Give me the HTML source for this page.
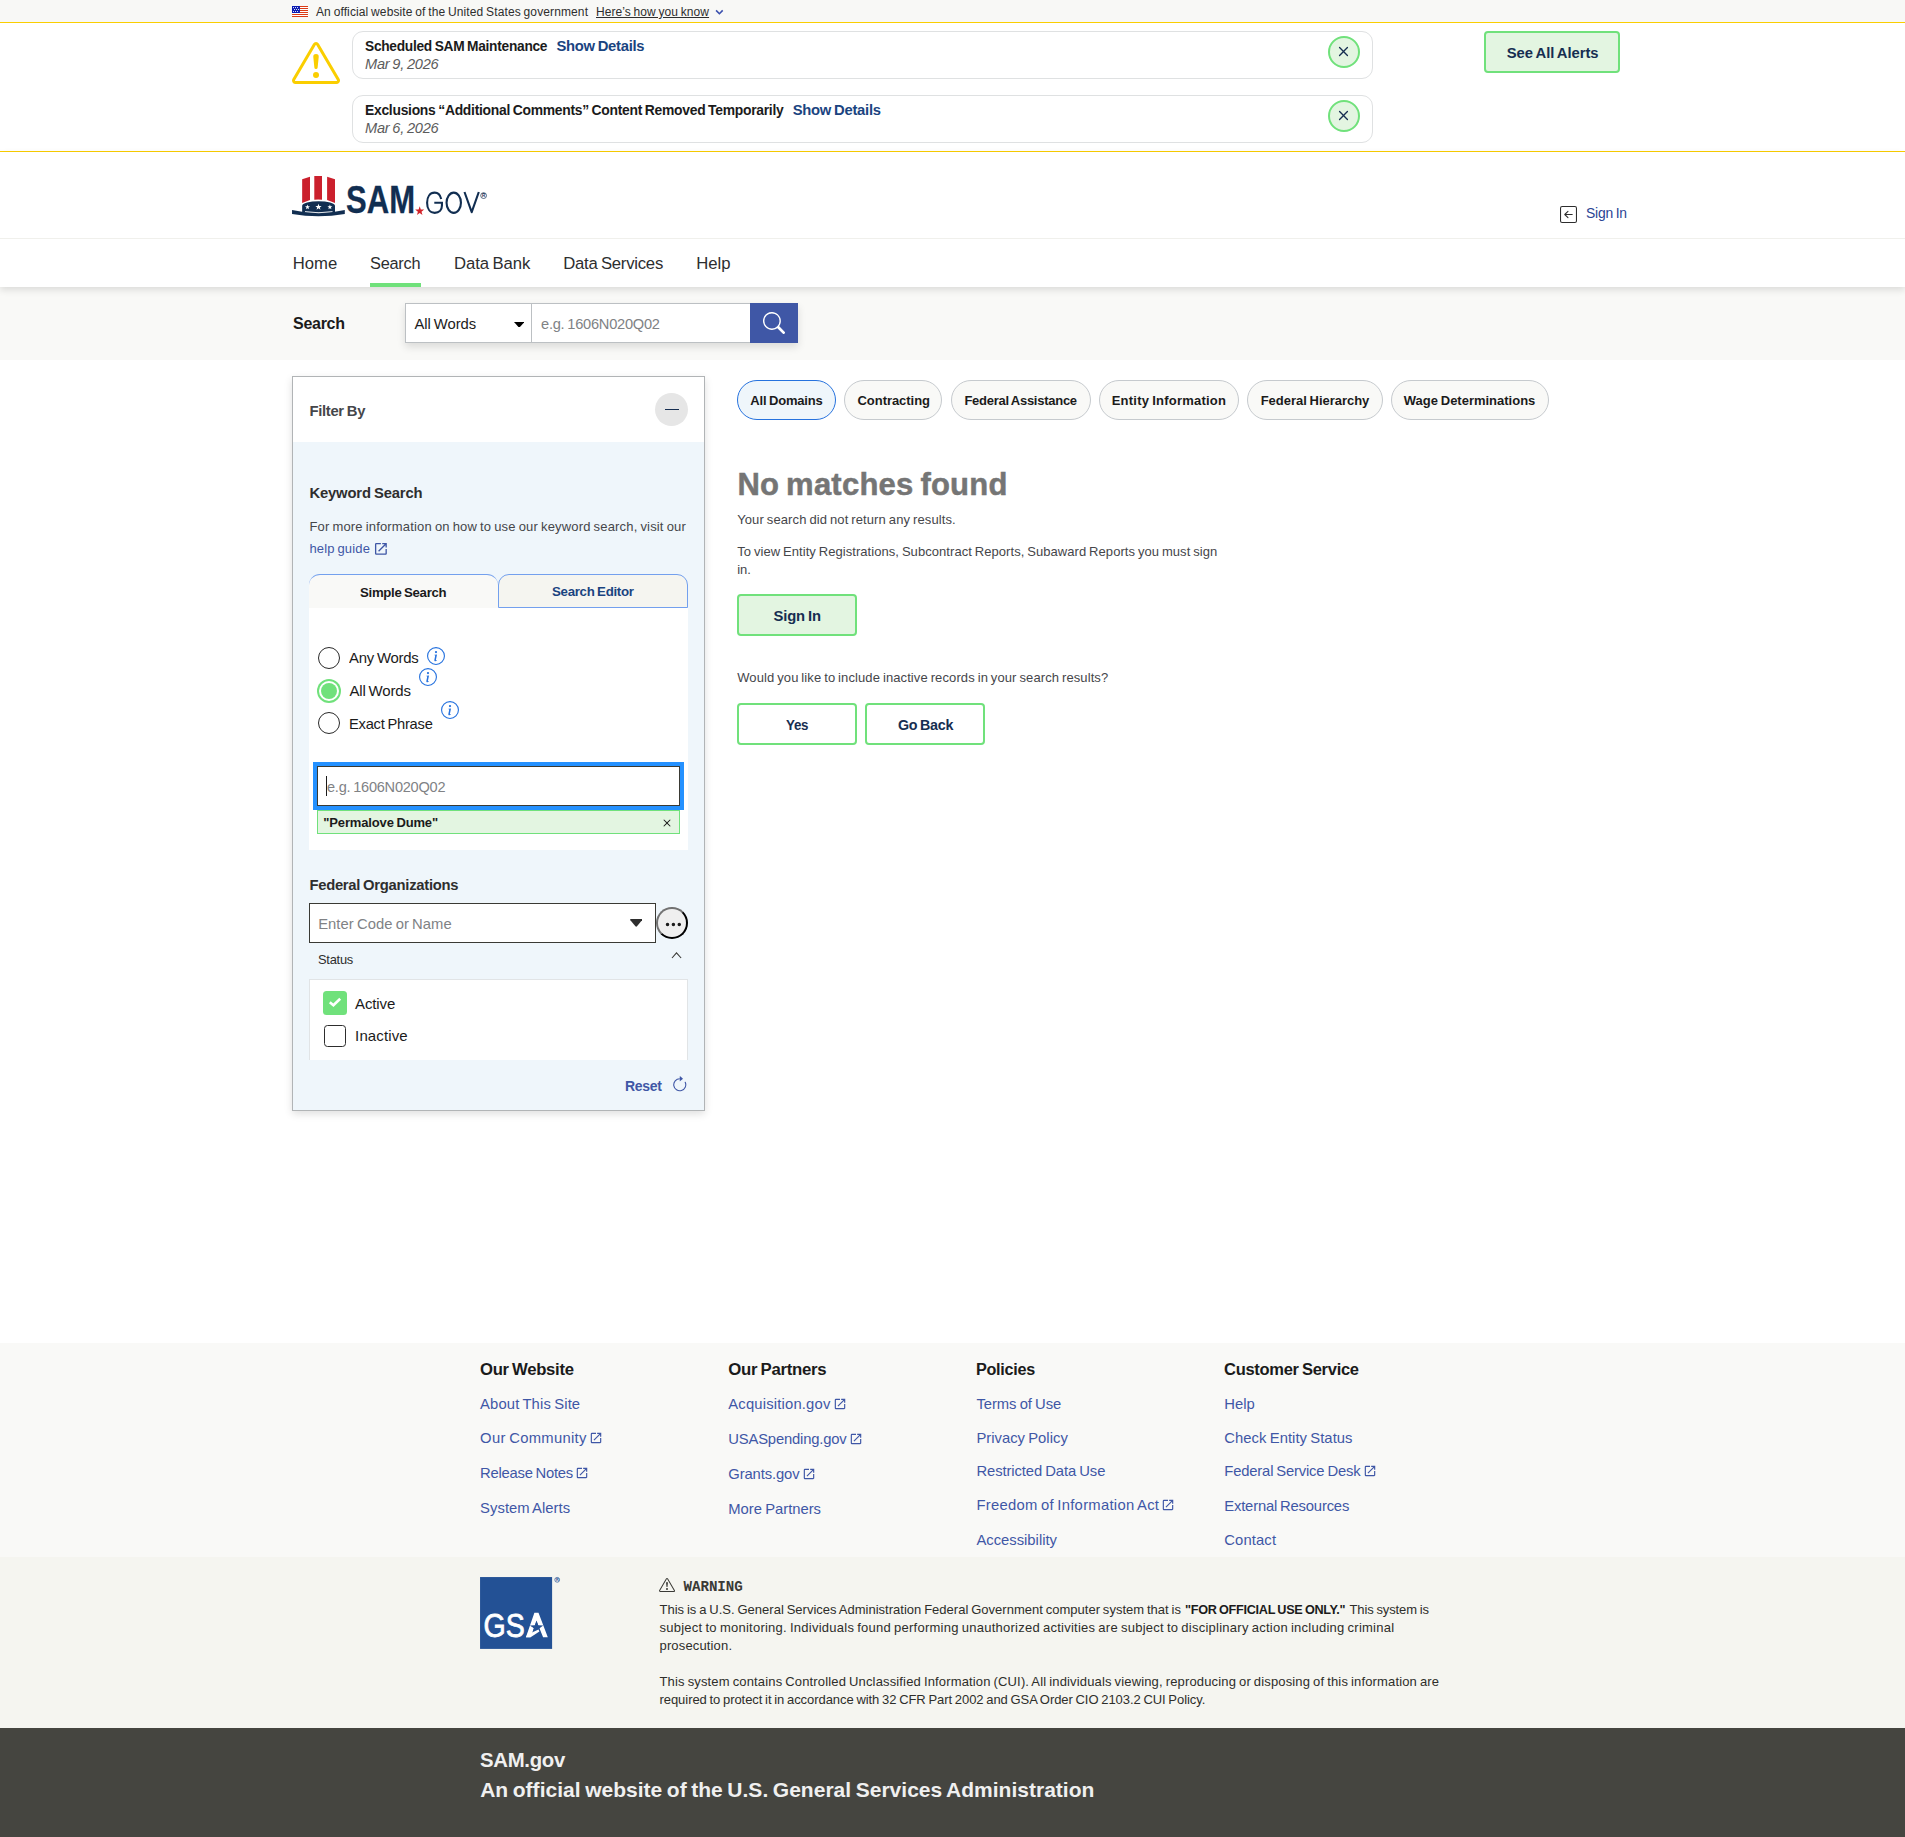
<!DOCTYPE html>
<html lang="en"><head><meta charset="utf-8"><title>SAM.gov | Search</title>
<style>
*{box-sizing:border-box;margin:0;padding:0}
html,body{width:1905px;height:1837px;overflow:hidden;background:#fff}
body{position:relative;font-family:"Liberation Sans",sans-serif}
.a{position:absolute;display:block}
.t{position:absolute;white-space:pre;line-height:20px;transform-origin:0 50%;font-family:"Liberation Sans",sans-serif}

.bg{position:absolute;left:0;width:1905px}
.card{position:absolute;left:352px;width:1021px;height:48px;border:1px solid #dfe1e2;border-radius:11px;background:#fff}
.cl{position:absolute;left:1328px;width:32px;height:32px;border:2px solid #70e17b;border-radius:50%;background:#e3f5e1}
.btn{position:absolute;height:42px;border:2px solid #70e17b;border-radius:4px}
.pill{position:absolute;top:380px;height:40px;border:1px solid #c6cace;border-radius:20px;background:#f9f9f7}
.radio{position:absolute;left:318px;width:22px;height:22px;border:1.3px solid #2a2a2a;border-radius:50%;background:#fff}
</style></head>
<body>
<div class="bg" style="top:0;height:22px;background:#f8f8f6"></div>
<div class="bg" style="top:22px;height:1px;background:#face00"></div>
<div class="bg" style="top:151px;height:1px;background:#face00"></div>
<div class="bg" style="top:287px;height:73px;background:#f9f9f7"></div>
<div class="bg" style="top:152px;height:135px;background:#fff;box-shadow:0 3px 7px rgba(0,0,0,.12)"></div>
<div class="bg" style="top:238px;height:1px;background:#f0f0ec"></div>
<div class="bg" style="top:1343px;height:214px;background:#f9f9f7"></div>
<div class="bg" style="top:1557px;height:170.5px;background:#f5f5f0"></div>
<div class="bg" style="top:1727.5px;height:109.5px;background:#454540"></div>
<svg class="a" style="left:292px;top:6px" width="16" height="11" viewBox="0 0 16 11"><rect width="16" height="11" fill="#fff"/><rect y="0" width="16" height="1" fill="#db3b16"/><rect y="2" width="16" height="1" fill="#db3b16"/><rect y="4" width="16" height="1" fill="#db3b16"/><rect y="6" width="16" height="1" fill="#db3b16"/><rect y="8" width="16" height="1" fill="#db3b16"/><rect y="10" width="16" height="1" fill="#db3b16"/><rect width="7.9" height="7" fill="#0b1cb3"/><circle cx="1.5" cy="1.6" r=".56" fill="#fff"/><circle cx="3.5" cy="1.6" r=".56" fill="#fff"/><circle cx="5.5" cy="1.6" r=".56" fill="#fff"/><circle cx="2.5" cy="3.5" r=".56" fill="#fff"/><circle cx="4.5" cy="3.5" r=".56" fill="#fff"/><circle cx="6.5" cy="3.5" r=".56" fill="#fff"/><circle cx="1.5" cy="5.5" r=".56" fill="#fff"/><circle cx="3.5" cy="5.5" r=".56" fill="#fff"/><circle cx="5.5" cy="5.5" r=".56" fill="#fff"/></svg>
<svg class="a" style="left:714px;top:8px" width="11" height="8" viewBox="714 8 11 8"><path d="M716.1 10.4L719.4 13.7L722.7 10.4" fill="none" stroke="#3a4fae" stroke-width="1.6"/></svg>
<svg class="a" style="left:292px;top:39px" width="48" height="48" viewBox="0 0 16 16" fill="#face00"><path d="M7.938 2.016A.13.13 0 0 1 8.002 2a.13.13 0 0 1 .063.016.15.15 0 0 1 .054.057l6.857 11.667c.036.06.035.124.002.183a.2.2 0 0 1-.054.06.1.1 0 0 1-.066.017H1.146a.1.1 0 0 1-.066-.017.2.2 0 0 1-.054-.06.18.18 0 0 1 .002-.183L7.884 2.073a.15.15 0 0 1 .054-.057m1.044-.45a1.13 1.13 0 0 0-1.96 0L.165 13.233c-.457.778.091 1.767.98 1.767h13.713c.889 0 1.438-.99.98-1.767z"/><path d="M7.002 12a1 1 0 1 1 2 0 1 1 0 0 1-2 0M7.1 5.995a.905.905 0 1 1 1.8 0l-.35 3.507a.552.552 0 0 1-1.1 0z"/></svg>
<div class="card" style="top:31px"></div><div class="card" style="top:95px"></div>
<div class="cl" style="top:36px"></div><div class="cl" style="top:100px"></div>
<svg class="a" style="left:1333.3px;top:41.1px" width="21" height="21" viewBox="0 0 16 16" fill="#162e51"><path d="M4.646 4.646a.5.5 0 0 1 .708 0L8 7.293l2.646-2.647a.5.5 0 0 1 .708.708L8.707 8l2.647 2.646a.5.5 0 0 1-.708.708L8 8.707l-2.646 2.647a.5.5 0 0 1-.708-.708L7.293 8 4.646 5.354a.5.5 0 0 1 0-.708"/></svg>
<svg class="a" style="left:1333.3px;top:105.1px" width="21" height="21" viewBox="0 0 16 16" fill="#162e51"><path d="M4.646 4.646a.5.5 0 0 1 .708 0L8 7.293l2.646-2.647a.5.5 0 0 1 .708.708L8.707 8l2.647 2.646a.5.5 0 0 1-.708.708L8 8.707l-2.646 2.647a.5.5 0 0 1-.708-.708L7.293 8 4.646 5.354a.5.5 0 0 1 0-.708"/></svg>
<div class="btn" style="left:1484px;top:31px;width:136px;background:#e3f5e1"></div>
<svg class="a" style="left:288px;top:172px" width="204" height="48" viewBox="288 172 204 48">
<g fill="#cb202d"><path d="M302.15 179.2L310 176.8L310 199.9L302.15 202.9Z"/>
<path d="M314.3 175.9L322 175.9L322 199.7Q318.2 199.3 314.3 199.7Z"/>
<path d="M327.1 176.8L335 179.2L335 202.9L327.1 199.9Z"/></g>
<path d="M302.15 205.8A16.43 4.6 0 0 1 335 205.8L335 212.6L302.15 212.6Z" fill="#112e51"/>
<path d="M292.04 209.9Q318.5 216.05 344.8 210L344.8 213.9Q318.5 218.4 292.04 213.9Z" fill="#112e51"/>
<path d="M305 211.5Q318.5 214.1 332.5 211.5" fill="none" stroke="#fff" stroke-width=".8"/>
<g fill="#fff"><path d="M307.5 204.5l.62 1.75 1.85.05-1.47 1.12.53 1.78-1.53-1.05-1.53 1.05.53-1.78-1.47-1.12 1.85-.05z"/>
<path d="M318.5 203.7l.8 2.2 2.35.07-1.86 1.43.67 2.25-1.96-1.33-1.96 1.33.67-2.25-1.86-1.43 2.35-.07z"/>
<path d="M329.9 204.5l.62 1.75 1.85.05-1.47 1.12.53 1.78-1.53-1.05-1.53 1.05.53-1.78-1.47-1.12 1.85-.05z"/></g>
<text x="346" y="212.8" font-family="Liberation Sans, sans-serif" font-weight="700" font-size="39.3" fill="#112e51" stroke="#112e51" stroke-width=".3" textLength="69" lengthAdjust="spacingAndGlyphs">SAM</text>
<path d="M419.7 206.3l1.1 3.2 3.4.1-2.7 2.05.97 3.25-2.77-1.93-2.77 1.93.97-3.25-2.7-2.05 3.4-.1z" fill="#d2232a"/>
<g fill="none" stroke="#112e51" stroke-width="2.1">
<path d="M441.2 198.9C440.2 195 437.9 192.65 434.7 192.65C429.9 192.65 427.1 196.9 427.1 202.75C427.1 208.6 429.9 212.85 434.7 212.85C439.2 212.85 441.95 209.8 441.95 205.6L441.95 202.75L434.3 202.75"/>
<ellipse cx="453.75" cy="202.75" rx="7.2" ry="10.1"/>
<path d="M464.5 192L471.7 212.2L478.8 192" stroke-linejoin="round"/>
</g>
<circle cx="483.6" cy="195.6" r="2.9" fill="none" stroke="#112e51" stroke-width=".7"/>
<text x="482" y="197.4" font-family="Liberation Sans, sans-serif" font-weight="700" font-size="4.6" fill="#112e51">R</text>
</svg>
<svg class="a" style="left:1560px;top:206px" width="17" height="17" viewBox="0 0 16 16" fill="#2d2d2d"><path fill-rule="evenodd" d="M15 2a1 1 0 0 0-1-1H2a1 1 0 0 0-1 1v12a1 1 0 0 0 1 1h12a1 1 0 0 0 1-1zM0 2a2 2 0 0 1 2-2h12a2 2 0 0 1 2 2v12a2 2 0 0 1-2 2H2a2 2 0 0 1-2-2zm11.5 5.5a.5.5 0 0 1 0 1H5.707l2.147 2.146a.5.5 0 0 1-.708.708l-3-3a.5.5 0 0 1 0-.708l3-3a.5.5 0 1 1 .708.708L5.707 7.5z"/></svg>
<div class="a" style="left:370.25px;top:283px;width:50.5px;height:4px;background:#70e17b"></div>
<div class="a" style="left:405px;top:303px;width:393px;height:40px;box-shadow:0 4px 8px rgba(0,0,0,.12);background:#fff"></div>
<div class="a" style="left:405px;top:303px;width:127px;height:39.5px;border:1px solid #bcc0c3;background:#fff"></div>
<div class="a" style="left:531px;top:303px;width:219.5px;height:39.5px;border:1px solid #bcc0c3;background:#fff"></div>
<div class="a" style="left:750px;top:303px;width:48px;height:40px;background:#3f57a6"></div>
<svg class="a" style="left:513.6px;top:321.7px" width="10.4" height="5.8" viewBox="0 0 10.4 5.8"><path d="M0 0H10.4L5.2 5.8Z" fill="#000"/></svg>
<svg class="a" style="left:763.4px;top:312.25px" width="22" height="22" viewBox="0 0 16 16" fill="#fff"><path d="M11.742 10.344a6.5 6.5 0 1 0-1.397 1.398h-.001q.044.06.098.115l3.85 3.85a1 1 0 0 0 1.415-1.414l-3.85-3.85a1 1 0 0 0-.115-.1zM12 6.5a5.5 5.5 0 1 1-11 0 5.5 5.5 0 0 1 11 0"/></svg>
<div class="a" style="left:292px;top:376px;width:412.6px;height:735px;border:1px solid #b1b4b6;background:#eff6fb;box-shadow:0 3px 8px rgba(0,0,0,.13)"></div>
<div class="a" style="left:293px;top:377px;width:410.6px;height:64.6px;background:#fff"></div>
<div class="a" style="left:655px;top:393px;width:33px;height:33px;border-radius:50%;background:#e6e6e6"></div>
<div class="a" style="left:665px;top:408.9px;width:14px;height:1.3px;background:#162e51"></div>
<svg class="a" style="left:373.02px;top:540.92px" width="15.8" height="15.8" viewBox="0 0 24 24" fill="#3f57a6"><path d="M19 19H5V5h7V3H5a2 2 0 0 0-2 2v14a2 2 0 0 0 2 2h14c1.1 0 2-.9 2-2v-7h-2v7zM14 3v2h3.59l-9.83 9.83 1.41 1.41L19 6.41V10h2V3h-7z"/></svg>
<div class="a" style="left:309px;top:574.4px;width:189.3px;height:34px;background:#f9f9f7;border-top:1px solid #73a0ee;border-radius:11px 11px 0 0"></div>
<div class="a" style="left:498.3px;top:574.4px;width:189.4px;height:33.4px;background:#f5f5f0;border:1px solid #73a0ee;border-radius:11px 11px 0 0"></div>
<div class="a" style="left:309px;top:608px;width:379px;height:242px;background:#fff"></div>
<div class="radio" style="top:647px"></div><div class="radio" style="top:712px"></div>
<div class="a" style="left:321px;top:683px;width:16px;height:16px;border-radius:50%;background:#70e17b;box-shadow:0 0 0 2px #fff,0 0 0 4px #70e17b"></div>
<svg class="a" style="left:427.3px;top:647px" width="18" height="18" viewBox="0 0 16 16" fill="#2672de"><path d="M8 15A7 7 0 1 1 8 1a7 7 0 0 1 0 14m0 1A8 8 0 1 0 8 0a8 8 0 0 0 0 16"/><path d="m8.93 6.588-2.29.287-.082.38.45.083c.294.07.352.176.288.469l-.738 3.468c-.194.897.105 1.319.808 1.319.545 0 1.178-.252 1.465-.598l.088-.416c-.2.176-.492.246-.686.246-.275 0-.375-.193-.304-.533zM9 4.5a1 1 0 1 1-2 0 1 1 0 0 1 2 0"/></svg>
<svg class="a" style="left:419.1px;top:668.1px" width="18" height="18" viewBox="0 0 16 16" fill="#2672de"><path d="M8 15A7 7 0 1 1 8 1a7 7 0 0 1 0 14m0 1A8 8 0 1 0 8 0a8 8 0 0 0 0 16"/><path d="m8.93 6.588-2.29.287-.082.38.45.083c.294.07.352.176.288.469l-.738 3.468c-.194.897.105 1.319.808 1.319.545 0 1.178-.252 1.465-.598l.088-.416c-.2.176-.492.246-.686.246-.275 0-.375-.193-.304-.533zM9 4.5a1 1 0 1 1-2 0 1 1 0 0 1 2 0"/></svg>
<svg class="a" style="left:441px;top:701.2px" width="18" height="18" viewBox="0 0 16 16" fill="#2672de"><path d="M8 15A7 7 0 1 1 8 1a7 7 0 0 1 0 14m0 1A8 8 0 1 0 8 0a8 8 0 0 0 0 16"/><path d="m8.93 6.588-2.29.287-.082.38.45.083c.294.07.352.176.288.469l-.738 3.468c-.194.897.105 1.319.808 1.319.545 0 1.178-.252 1.465-.598l.088-.416c-.2.176-.492.246-.686.246-.275 0-.375-.193-.304-.533zM9 4.5a1 1 0 1 1-2 0 1 1 0 0 1 2 0"/></svg>
<div class="a" style="left:317px;top:766px;width:363px;height:39.8px;border:1px solid #3a3a34;background:#fff;outline:4px solid #2491ff"></div>
<div class="a" style="left:326px;top:776px;width:1px;height:20px;background:#1b1b1b"></div>
<div class="a" style="left:317px;top:810px;width:363px;height:24px;border:1px solid #70e17b;background:#e3f5e1"></div>
<svg class="a" style="left:658.9px;top:814.8px" width="16" height="16" viewBox="0 0 16 16" fill="#1b1b1b"><path d="M4.646 4.646a.5.5 0 0 1 .708 0L8 7.293l2.646-2.647a.5.5 0 0 1 .708.708L8.707 8l2.647 2.646a.5.5 0 0 1-.708.708L8 8.707l-2.646 2.647a.5.5 0 0 1-.708-.708L7.293 8 4.646 5.354a.5.5 0 0 1 0-.708"/></svg>
<div class="a" style="left:309px;top:903px;width:347px;height:39.9px;border:1px solid #3a3a34;background:#fff"></div>
<svg class="a" style="left:629.7px;top:919.4px" width="12.4" height="7.8" viewBox="0 0 12.4 7.8"><path d="M.8 0H11.6Q12.8 .2 12 1.2L7 7.3Q6.2 8 5.4 7.3L.4 1.2Q-.4 .2 .8 0Z" fill="#2e2e2e"/></svg>
<div class="a" style="left:656.4px;top:906.9px;width:31.8px;height:31.8px;border:2px solid;border-color:#727272 #000 #000 #727272;border-radius:50%;background:#efefef"></div>
<svg class="a" style="left:663.8px;top:914.6px" width="18.8" height="18.8" viewBox="0 0 16 16" fill="#1b1b1b"><path d="M3 9.5a1.5 1.5 0 1 1 0-3 1.5 1.5 0 0 1 0 3m5 0a1.5 1.5 0 1 1 0-3 1.5 1.5 0 0 1 0 3m5 0a1.5 1.5 0 1 1 0-3 1.5 1.5 0 0 1 0 3"/></svg>
<svg class="a" style="left:669px;top:950px" width="15" height="11" viewBox="669 950 15 11"><path d="M672 958L676.5 952.9L681.1 958" fill="none" stroke="#3a3a36" stroke-width="1.1"/></svg>
<div class="a" style="left:309px;top:979.4px;width:379px;height:80.2px;background:#fff;border:1px solid #e1e4e6;border-bottom:0"></div>
<div class="a" style="left:322.8px;top:990.8px;width:24.2px;height:24.2px;border-radius:3.5px;background:#70e17b"></div>
<svg class="a" style="left:326px;top:995px" width="18" height="15" viewBox="326 995 18 15"><path d="M329.8 1002.3L333.4 1005.3L340.2 998.8" fill="none" stroke="#fff" stroke-width="2.6"/></svg>
<div class="a" style="left:324px;top:1025px;width:22px;height:22px;border-radius:3.5px;border:1.4px solid #2d2d2d;background:#fff"></div>
<svg class="a" style="left:670.5px;top:1075.9px" width="17.5" height="17.5" viewBox="0 0 16 16" fill="#3f57a6"><path fill-rule="evenodd" d="M8 3a5 5 0 1 0 4.546 2.914.5.5 0 0 1 .908-.417A6 6 0 1 1 8 2z"/><path d="M8 4.466V.534a.25.25 0 0 1 .41-.192l2.36 1.966c.12.1.12.284 0 .384L8.41 4.658A.25.25 0 0 1 8 4.466"/></svg>
<div class="pill" style="left:737px;width:99.0px;border-color:#2672de;background:#eff6fb"></div>
<div class="pill" style="left:844.1px;width:98.4px"></div>
<div class="pill" style="left:951px;width:139.7px"></div>
<div class="pill" style="left:1099.1px;width:139.7px"></div>
<div class="pill" style="left:1247.2px;width:135.7px"></div>
<div class="pill" style="left:1391px;width:157.9px"></div>
<div class="btn" style="left:737px;top:594px;width:119.7px;background:#e3f5e1"></div>
<div class="btn" style="left:737px;top:703px;width:119.7px;background:#fff"></div>
<div class="btn" style="left:865.1px;top:703px;width:119.7px;background:#fff"></div>
<svg class="a" style="left:588.65px;top:1431.25px" width="14" height="14" viewBox="0 0 24 24" fill="#3f57a6"><path d="M19 19H5V5h7V3H5a2 2 0 0 0-2 2v14a2 2 0 0 0 2 2h14c1.1 0 2-.9 2-2v-7h-2v7zM14 3v2h3.59l-9.83 9.83 1.41 1.41L19 6.41V10h2V3h-7z"/></svg>
<svg class="a" style="left:575.35px;top:1465.95px" width="14" height="14" viewBox="0 0 24 24" fill="#3f57a6"><path d="M19 19H5V5h7V3H5a2 2 0 0 0-2 2v14a2 2 0 0 0 2 2h14c1.1 0 2-.9 2-2v-7h-2v7zM14 3v2h3.59l-9.83 9.83 1.41 1.41L19 6.41V10h2V3h-7z"/></svg>
<svg class="a" style="left:832.55px;top:1397.25px" width="14" height="14" viewBox="0 0 24 24" fill="#3f57a6"><path d="M19 19H5V5h7V3H5a2 2 0 0 0-2 2v14a2 2 0 0 0 2 2h14c1.1 0 2-.9 2-2v-7h-2v7zM14 3v2h3.59l-9.83 9.83 1.41 1.41L19 6.41V10h2V3h-7z"/></svg>
<svg class="a" style="left:848.95px;top:1431.95px" width="14" height="14" viewBox="0 0 24 24" fill="#3f57a6"><path d="M19 19H5V5h7V3H5a2 2 0 0 0-2 2v14a2 2 0 0 0 2 2h14c1.1 0 2-.9 2-2v-7h-2v7zM14 3v2h3.59l-9.83 9.83 1.41 1.41L19 6.41V10h2V3h-7z"/></svg>
<svg class="a" style="left:801.85px;top:1467.05px" width="14" height="14" viewBox="0 0 24 24" fill="#3f57a6"><path d="M19 19H5V5h7V3H5a2 2 0 0 0-2 2v14a2 2 0 0 0 2 2h14c1.1 0 2-.9 2-2v-7h-2v7zM14 3v2h3.59l-9.83 9.83 1.41 1.41L19 6.41V10h2V3h-7z"/></svg>
<svg class="a" style="left:1161.25px;top:1497.95px" width="14" height="14" viewBox="0 0 24 24" fill="#3f57a6"><path d="M19 19H5V5h7V3H5a2 2 0 0 0-2 2v14a2 2 0 0 0 2 2h14c1.1 0 2-.9 2-2v-7h-2v7zM14 3v2h3.59l-9.83 9.83 1.41 1.41L19 6.41V10h2V3h-7z"/></svg>
<svg class="a" style="left:1362.85px;top:1463.95px" width="14" height="14" viewBox="0 0 24 24" fill="#3f57a6"><path d="M19 19H5V5h7V3H5a2 2 0 0 0-2 2v14a2 2 0 0 0 2 2h14c1.1 0 2-.9 2-2v-7h-2v7zM14 3v2h3.59l-9.83 9.83 1.41 1.41L19 6.41V10h2V3h-7z"/></svg>
<svg class="a" style="left:480px;top:1576px" width="82" height="74" viewBox="480 1576 82 74">
<rect x="480.05" y="1577.05" width="72.05" height="71.85" fill="#235195"/>
<text x="483.6" y="1637.1" font-family="Liberation Sans, sans-serif" font-size="33.6" fill="#fff" stroke="#fff" stroke-width=".8" textLength="41.2" lengthAdjust="spacingAndGlyphs">GS</text>
<path fill="#fff" d="M534.4 1612.8L538.5 1612.8L547.8 1637.3L543.1 1637.3L536.5 1620.9L530.4 1637.3L525.9 1637.3Z"/>
<path fill="#235195" d="M536.5 1620.6l1.7 4.7 5 .1-4 3 1.5 4.8-4.2-2.9-4.1 2.9 1.5-4.8-4-3 5-.1z"/>
<path fill="#fff" d="M525.9 1637.3L530.6 1637.3L539.4 1631.6L538.5 1629.5L531.9 1632.6L533.4 1628.3L531.4 1626.8Z"/>
<circle cx="557.2" cy="1579.8" r="2.4" fill="none" stroke="#235195" stroke-width=".7"/>
<text x="555.9" y="1581.2" font-family="Liberation Sans, sans-serif" font-weight="700" font-size="3.8" fill="#235195">R</text>
</svg>
<svg class="a" style="left:658.8px;top:1577.2px" width="16" height="16" viewBox="0 0 16 16" fill="#3a3a36"><path d="M7.938 2.016A.13.13 0 0 1 8.002 2a.13.13 0 0 1 .063.016.15.15 0 0 1 .054.057l6.857 11.667c.036.06.035.124.002.183a.2.2 0 0 1-.054.06.1.1 0 0 1-.066.017H1.146a.1.1 0 0 1-.066-.017.2.2 0 0 1-.054-.06.18.18 0 0 1 .002-.183L7.884 2.073a.15.15 0 0 1 .054-.057m1.044-.45a1.13 1.13 0 0 0-1.96 0L.165 13.233c-.457.778.091 1.767.98 1.767h13.713c.889 0 1.438-.99.98-1.767z"/><path d="M7.002 12a1 1 0 1 1 2 0 1 1 0 0 1-2 0M7.1 5.995a.905.905 0 1 1 1.8 0l-.35 3.507a.552.552 0 0 1-1.1 0z"/></svg>
<span class="t" id="t0" style="left:316.00px;top:2.00px;font-size:12px;color:#2e2e2e;word-spacing:-0.74px;letter-spacing:0.118px">An official website of the United States government</span>
<span class="t" id="t1" style="left:596.00px;top:2.00px;font-size:12px;color:#2e2e2e;word-spacing:-0.74px;text-decoration:underline;letter-spacing:0.076px">Here’s how you know</span>
<span class="t" id="t2" style="left:365.30px;top:36.00px;font-size:14.8px;color:#1b1b1b;word-spacing:-0.92px;font-weight:700;letter-spacing:-0.300px;transform:scaleX(0.9287)">Scheduled SAM Maintenance</span>
<span class="t" id="t3" style="left:556.50px;top:36.00px;font-size:14.8px;color:#1a4480;word-spacing:-0.92px;font-weight:700;letter-spacing:-0.288px">Show Details</span>
<span class="t" id="t4" style="left:365.30px;top:54.00px;font-size:14.8px;color:#5c5c5c;word-spacing:-0.92px;font-style:italic;letter-spacing:-0.250px;transform:scaleX(0.9876)">Mar 9, 2026</span>
<span class="t" id="t5" style="left:365.30px;top:100.00px;font-size:14.8px;color:#1b1b1b;word-spacing:-0.92px;font-weight:700;letter-spacing:-0.300px;transform:scaleX(0.9387)">Exclusions “Additional Comments” Content Removed Temporarily</span>
<span class="t" id="t6" style="left:792.70px;top:100.00px;font-size:14.8px;color:#1a4480;word-spacing:-0.92px;font-weight:700;letter-spacing:-0.261px">Show Details</span>
<span class="t" id="t7" style="left:365.30px;top:118.00px;font-size:14.8px;color:#5c5c5c;word-spacing:-0.92px;font-style:italic;letter-spacing:-0.250px;transform:scaleX(0.9876)">Mar 6, 2026</span>
<span class="t" id="t8" style="left:1506.80px;top:43.00px;font-size:14.8px;color:#162e51;word-spacing:-0.92px;font-weight:700;letter-spacing:-0.059px">See All Alerts</span>
<span class="t" id="t9" style="left:1586.20px;top:203.00px;font-size:15px;color:#2a4494;word-spacing:-0.93px;letter-spacing:-0.250px;transform:scaleX(0.9259)">Sign In</span>
<span class="t" id="t10" style="left:292.75px;top:254.00px;font-size:16.7px;color:#2d2e2f;letter-spacing:-0.005px">Home</span>
<span class="t" id="t11" style="left:370.25px;top:254.00px;font-size:16.7px;color:#2d2e2f;letter-spacing:-0.250px;transform:scaleX(0.9782)">Search</span>
<span class="t" id="t12" style="left:454.00px;top:254.00px;font-size:16.7px;color:#2d2e2f;word-spacing:-1.04px;letter-spacing:-0.080px">Data Bank</span>
<span class="t" id="t13" style="left:563.25px;top:254.00px;font-size:16.7px;color:#2d2e2f;word-spacing:-1.04px;letter-spacing:-0.237px">Data Services</span>
<span class="t" id="t14" style="left:696.25px;top:254.00px;font-size:16.7px;color:#2d2e2f;letter-spacing:-0.026px">Help</span>
<span class="t" id="t15" style="left:292.50px;top:314.00px;font-size:16.7px;color:#1b1b1b;font-weight:700;letter-spacing:-0.300px;transform:scaleX(0.9599)">Search</span>
<span class="t" id="t16" style="left:414.40px;top:314.00px;font-size:14.8px;color:#1b1b1b;word-spacing:-0.92px;letter-spacing:-0.041px">All Words</span>
<span class="t" id="t17" style="left:540.50px;top:314.00px;font-size:14.8px;color:#808285;word-spacing:-0.92px;letter-spacing:-0.250px;transform:scaleX(0.9884)">e.g. 1606N020Q02</span>
<span class="t" id="t18" style="left:309.40px;top:401.00px;font-size:14.8px;color:#45464a;word-spacing:-0.92px;font-weight:700;letter-spacing:-0.287px">Filter By</span>
<span class="t" id="t19" style="left:309.40px;top:483.00px;font-size:14.8px;color:#2e2e2e;word-spacing:-0.92px;font-weight:700;letter-spacing:-0.142px">Keyword Search</span>
<span class="t" id="t20" style="left:309.40px;top:517.00px;font-size:13px;color:#45464a;word-spacing:-0.81px;letter-spacing:0.175px">For more information on how to use our keyword search, visit our</span>
<span class="t" id="t21" style="left:309.40px;top:539.00px;font-size:13px;color:#3f57a6;word-spacing:-0.81px;letter-spacing:0.144px">help guide</span>
<span class="t" id="t22" style="left:360.20px;top:583.00px;font-size:13.4px;color:#1b1b1b;word-spacing:-0.83px;font-weight:700;letter-spacing:-0.300px;transform:scaleX(0.9856)">Simple Search</span>
<span class="t" id="t23" style="left:551.90px;top:582.00px;font-size:13.4px;color:#1a4480;word-spacing:-0.83px;font-weight:700;letter-spacing:-0.300px;transform:scaleX(0.9921)">Search Editor</span>
<span class="t" id="t24" style="left:349.40px;top:648.00px;font-size:15px;color:#1b1b1b;word-spacing:-0.93px;letter-spacing:-0.250px;transform:scaleX(0.9935)">Any Words</span>
<span class="t" id="t25" style="left:349.40px;top:681.00px;font-size:15px;color:#1b1b1b;word-spacing:-0.93px;letter-spacing:-0.173px">All Words</span>
<span class="t" id="t26" style="left:349.40px;top:714.00px;font-size:15px;color:#1b1b1b;word-spacing:-0.93px;letter-spacing:-0.250px;transform:scaleX(0.9798)">Exact Phrase</span>
<span class="t" id="t27" style="left:326.70px;top:777.00px;font-size:14.8px;color:#808285;word-spacing:-0.92px;letter-spacing:-0.250px;transform:scaleX(0.9843)">e.g. 1606N020Q02</span>
<span class="t" id="t28" style="left:323.30px;top:813.00px;font-size:13px;color:#1b1b1b;word-spacing:-0.81px;font-weight:700;letter-spacing:-0.148px">"Permalove Dume"</span>
<span class="t" id="t29" style="left:309.40px;top:875.00px;font-size:14.8px;color:#2e2e2e;word-spacing:-0.92px;font-weight:700;letter-spacing:-0.264px">Federal Organizations</span>
<span class="t" id="t30" style="left:318.20px;top:914.00px;font-size:14.8px;color:#808285;word-spacing:-0.92px;letter-spacing:0.032px">Enter Code or Name</span>
<span class="t" id="t31" style="left:317.50px;top:950.00px;font-size:13px;color:#2e2e2e;letter-spacing:-0.250px;transform:scaleX(0.9913)">Status</span>
<span class="t" id="t32" style="left:355.10px;top:994.00px;font-size:15px;color:#1b1b1b;letter-spacing:-0.132px">Active</span>
<span class="t" id="t33" style="left:355.10px;top:1026.00px;font-size:15px;color:#1b1b1b;letter-spacing:0.114px">Inactive</span>
<span class="t" id="t34" style="left:625.30px;top:1076.00px;font-size:14.8px;color:#3f57a6;font-weight:700;letter-spacing:-0.300px;transform:scaleX(0.9460)">Reset</span>
<span class="t" id="t35" style="left:750.30px;top:391.00px;font-size:13px;color:#1b1b1b;word-spacing:-0.81px;font-weight:700;letter-spacing:-0.183px">All Domains</span>
<span class="t" id="t36" style="left:857.50px;top:391.00px;font-size:13px;color:#1b1b1b;font-weight:700;letter-spacing:-0.045px">Contracting</span>
<span class="t" id="t37" style="left:964.40px;top:391.00px;font-size:13px;color:#1b1b1b;word-spacing:-0.81px;font-weight:700;letter-spacing:-0.266px">Federal Assistance</span>
<span class="t" id="t38" style="left:1111.70px;top:391.00px;font-size:13px;color:#1b1b1b;word-spacing:-0.81px;font-weight:700;letter-spacing:0.228px">Entity Information</span>
<span class="t" id="t39" style="left:1260.70px;top:391.00px;font-size:13px;color:#1b1b1b;word-spacing:-0.81px;font-weight:700;letter-spacing:-0.027px">Federal Hierarchy</span>
<span class="t" id="t40" style="left:1403.80px;top:391.00px;font-size:13px;color:#1b1b1b;word-spacing:-0.81px;font-weight:700;letter-spacing:-0.007px">Wage Determinations</span>
<span class="t" id="t41" style="left:737.40px;top:475.00px;font-size:31px;color:#757575;word-spacing:-1.92px;font-weight:700;-webkit-text-stroke:0.5px #757575;letter-spacing:0.229px">No matches found</span>
<span class="t" id="t42" style="left:737.20px;top:510.00px;font-size:13px;color:#45464a;word-spacing:-0.81px;letter-spacing:0.109px">Your search did not return any results.</span>
<span class="t" id="t43" style="left:737.20px;top:542.00px;font-size:13px;color:#45464a;word-spacing:-0.81px;letter-spacing:0.059px">To view Entity Registrations, Subcontract Reports, Subaward Reports you must sign</span>
<span class="t" id="t44" style="left:737.20px;top:560.00px;font-size:13px;color:#45464a;letter-spacing:-0.017px">in.</span>
<span class="t" id="t45" style="left:773.60px;top:606.00px;font-size:14.8px;color:#162e51;word-spacing:-0.92px;font-weight:700;letter-spacing:-0.168px">Sign In</span>
<span class="t" id="t46" style="left:737.20px;top:668.00px;font-size:13px;color:#45464a;word-spacing:-0.81px;letter-spacing:0.100px">Would you like to include inactive records in your search results?</span>
<span class="t" id="t47" style="left:785.90px;top:715.00px;font-size:14.8px;color:#162e51;font-weight:700;letter-spacing:-0.300px;transform:scaleX(0.9030)">Yes</span>
<span class="t" id="t48" style="left:897.60px;top:715.00px;font-size:14.8px;color:#162e51;word-spacing:-0.92px;font-weight:700;letter-spacing:-0.300px;transform:scaleX(0.9664)">Go Back</span>
<span class="t" id="t49" style="left:480.10px;top:1360.00px;font-size:16.8px;color:#1b1b1b;word-spacing:-1.04px;font-weight:700;letter-spacing:-0.300px;transform:scaleX(0.9947)">Our Website</span>
<span class="t" id="t50" style="left:728.30px;top:1360.00px;font-size:16.8px;color:#1b1b1b;word-spacing:-1.04px;font-weight:700;letter-spacing:-0.300px">Our Partners</span>
<span class="t" id="t51" style="left:976.40px;top:1360.00px;font-size:16.8px;color:#1b1b1b;font-weight:700;letter-spacing:-0.300px;transform:scaleX(0.9652)">Policies</span>
<span class="t" id="t52" style="left:1224.30px;top:1360.00px;font-size:16.8px;color:#1b1b1b;word-spacing:-1.04px;font-weight:700;letter-spacing:-0.300px;transform:scaleX(0.9842)">Customer Service</span>
<span class="t" id="t53" style="left:480.10px;top:1394.00px;font-size:14.8px;color:#3f57a6;word-spacing:-0.92px;letter-spacing:0.126px">About This Site</span>
<span class="t" id="t54" style="left:480.10px;top:1428.00px;font-size:14.8px;color:#3f57a6;word-spacing:-0.92px;letter-spacing:0.301px">Our Community</span>
<span class="t" id="t55" style="left:480.10px;top:1463.00px;font-size:14.8px;color:#3f57a6;word-spacing:-0.92px;letter-spacing:-0.250px">Release Notes</span>
<span class="t" id="t56" style="left:480.10px;top:1498.00px;font-size:14.8px;color:#3f57a6;word-spacing:-0.92px;letter-spacing:0.039px">System Alerts</span>
<span class="t" id="t57" style="left:728.30px;top:1394.00px;font-size:14.8px;color:#3f57a6;letter-spacing:0.176px">Acquisition.gov</span>
<span class="t" id="t58" style="left:728.30px;top:1429.00px;font-size:14.8px;color:#3f57a6;letter-spacing:-0.181px">USASpending.gov</span>
<span class="t" id="t59" style="left:728.30px;top:1464.00px;font-size:14.8px;color:#3f57a6;letter-spacing:-0.119px">Grants.gov</span>
<span class="t" id="t60" style="left:728.30px;top:1499.00px;font-size:14.8px;color:#3f57a6;word-spacing:-0.92px;letter-spacing:-0.011px">More Partners</span>
<span class="t" id="t61" style="left:976.40px;top:1394.00px;font-size:14.8px;color:#3f57a6;word-spacing:-0.92px;letter-spacing:-0.039px">Terms of Use</span>
<span class="t" id="t62" style="left:976.40px;top:1428.00px;font-size:14.8px;color:#3f57a6;word-spacing:-0.92px;letter-spacing:0.018px">Privacy Policy</span>
<span class="t" id="t63" style="left:976.40px;top:1461.00px;font-size:14.8px;color:#3f57a6;word-spacing:-0.92px;letter-spacing:-0.087px">Restricted Data Use</span>
<span class="t" id="t64" style="left:976.40px;top:1495.00px;font-size:14.8px;color:#3f57a6;word-spacing:-0.92px;letter-spacing:0.275px">Freedom of Information Act</span>
<span class="t" id="t65" style="left:976.40px;top:1530.00px;font-size:14.8px;color:#3f57a6">Accessibility</span>
<span class="t" id="t66" style="left:1224.30px;top:1394.00px;font-size:14.8px;color:#3f57a6;letter-spacing:0.021px">Help</span>
<span class="t" id="t67" style="left:1224.30px;top:1428.00px;font-size:14.8px;color:#3f57a6;word-spacing:-0.92px;letter-spacing:0.051px">Check Entity Status</span>
<span class="t" id="t68" style="left:1224.30px;top:1461.00px;font-size:14.8px;color:#3f57a6;word-spacing:-0.92px;letter-spacing:-0.174px">Federal Service Desk</span>
<span class="t" id="t69" style="left:1224.30px;top:1496.00px;font-size:14.8px;color:#3f57a6;word-spacing:-0.92px;letter-spacing:-0.188px">External Resources</span>
<span class="t" id="t70" style="left:1224.30px;top:1530.00px;font-size:14.8px;color:#3f57a6;letter-spacing:0.117px">Contact</span>
<span class="t" id="t71" style="left:683.40px;top:1577.00px;font-size:14.2px;color:#3a3a36;font-weight:700;font-family:'Liberation Mono',monospace;letter-spacing:-0.018px">WARNING</span>
<span class="t" id="t72" style="left:659.50px;top:1600.00px;font-size:13px;color:#2e2e2a;word-spacing:-0.81px;letter-spacing:0.018px">This is a U.S. General Services Administration Federal Government computer system that is</span>
<span class="t" id="t73" style="left:1184.90px;top:1600.00px;font-size:13px;color:#1b1b1b;word-spacing:-0.81px;font-weight:700;letter-spacing:-0.300px;transform:scaleX(0.9745)">"FOR OFFICIAL USE ONLY."</span>
<span class="t" id="t74" style="left:1349.50px;top:1600.00px;font-size:13px;color:#2e2e2a;word-spacing:-0.81px;letter-spacing:-0.095px">This system is</span>
<span class="t" id="t75" style="left:659.50px;top:1618.00px;font-size:13px;color:#2e2e2a;word-spacing:-0.81px;letter-spacing:0.250px">subject to monitoring. Individuals found performing unauthorized activities are subject to disciplinary action including criminal</span>
<span class="t" id="t76" style="left:659.50px;top:1636.00px;font-size:13px;color:#2e2e2a;letter-spacing:0.152px">prosecution.</span>
<span class="t" id="t77" style="left:659.50px;top:1672.00px;font-size:13px;color:#2e2e2a;word-spacing:-0.81px;letter-spacing:0.153px">This system contains Controlled Unclassified Information (CUI). All individuals viewing, reproducing or disposing of this information are</span>
<span class="t" id="t78" style="left:659.50px;top:1690.00px;font-size:13px;color:#2e2e2a;word-spacing:-0.81px;letter-spacing:-0.055px">required to protect it in accordance with 32 CFR Part 2002 and GSA Order CIO 2103.2 CUI Policy.</span>
<span class="t" id="t79" style="left:480.20px;top:1750.00px;font-size:21px;color:#f0f0f0;font-weight:700;letter-spacing:-0.300px;transform:scaleX(0.9688)">SAM.gov</span>
<span class="t" id="t80" style="left:480.20px;top:1780.00px;font-size:21px;color:#f0f0f0;word-spacing:-1.30px;font-weight:700;letter-spacing:0.017px">An official website of the U.S. General Services Administration</span>

</body></html>
